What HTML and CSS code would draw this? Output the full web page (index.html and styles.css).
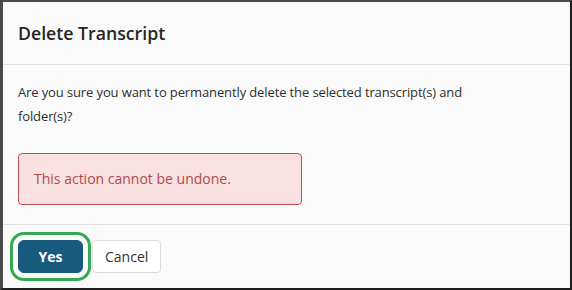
FILE: index.html
```html
<!DOCTYPE html>
<html>
<head>
<meta charset="utf-8">
<link rel="stylesheet" href="styles.css">
</head>
<body>
<div class="modal">
  <div class="modal-header">
    <h1 class="modal-title">Delete Transcript</h1>
  </div>
  <div class="modal-body">
    <p class="message">Are you sure you want to permanently delete the selected transcript(s) and folder(s)?</p>
    <div class="alert">This action cannot be undone.</div>
  </div>
  <div class="modal-footer">
    <button class="btn btn-primary">Yes</button>
    <button class="btn btn-default">Cancel</button>
  </div>
</div>
</body>
</html>
```
FILE: styles.css
```css
html, body {
  margin: 0;
  padding: 0;
  background: #fafafa;
}
body {
  font-family: "Open Sans", "Noto Sans", sans-serif;
  color: #333;
}
.modal {
  box-sizing: border-box;
  width: 572px;
  height: 290px;
  background: #fafafa;
  border-top: 2px solid #4a4a4a;
  border-left: 3px solid #4a4a4a;
  border-right: 2px solid #1e1e1e;
  border-bottom: 2px solid #1e1e1e;
  display: flex;
  flex-direction: column;
}
.modal-header {
  height: 63px;
  box-sizing: border-box;
  padding: 0 15px;
  display: flex;
  align-items: center;
  border-bottom: 1px solid #e2e2e2;
}
.modal-title {
  margin: 0;
  font-size: 17.7px;
  font-weight: 600;
  color: #262626;
}
.modal-body {
  padding: 15px 15px 0;
  height: 161px;
  box-sizing: border-box;
  border-bottom: 1px solid #e2e2e2;
}
.message {
  margin: 0 0 25px;
  max-width: 470px;
  font-size: 13px;
  letter-spacing: -0.12px;
  line-height: 24px;
  color: #2e2e2e;
}
.alert {
  width: 284px;
  box-sizing: border-box;
  height: 52px;
  padding: 0 15px;
  display: flex;
  align-items: center;
  background: #fae1e1;
  border: 1px solid #c0504d;
  border-radius: 4px;
  color: #b0494b;
  font-size: 14px;
}
.modal-footer {
  padding: 15px 15px;
  display: flex;
  gap: 9px;
  align-items: flex-start;
}
.btn {
  font-family: "Open Sans", "Noto Sans", sans-serif;
  font-size: 14px;
  height: 33px;
  border-radius: 4px;
  padding: 0 12px;
  cursor: pointer;
}
.btn-primary {
  width: 65px;
  background: #185a7d;
  border: 1px solid #185a7d;
  color: #fff;
  font-weight: 700;
  outline: 3px solid #34a853;
  outline-offset: 5px;
  border-radius: 6px;
}
.btn-default {
  width: 69px;
  background: #fff;
  border: 1px solid #dcdcdc;
  color: #333;
}
```
